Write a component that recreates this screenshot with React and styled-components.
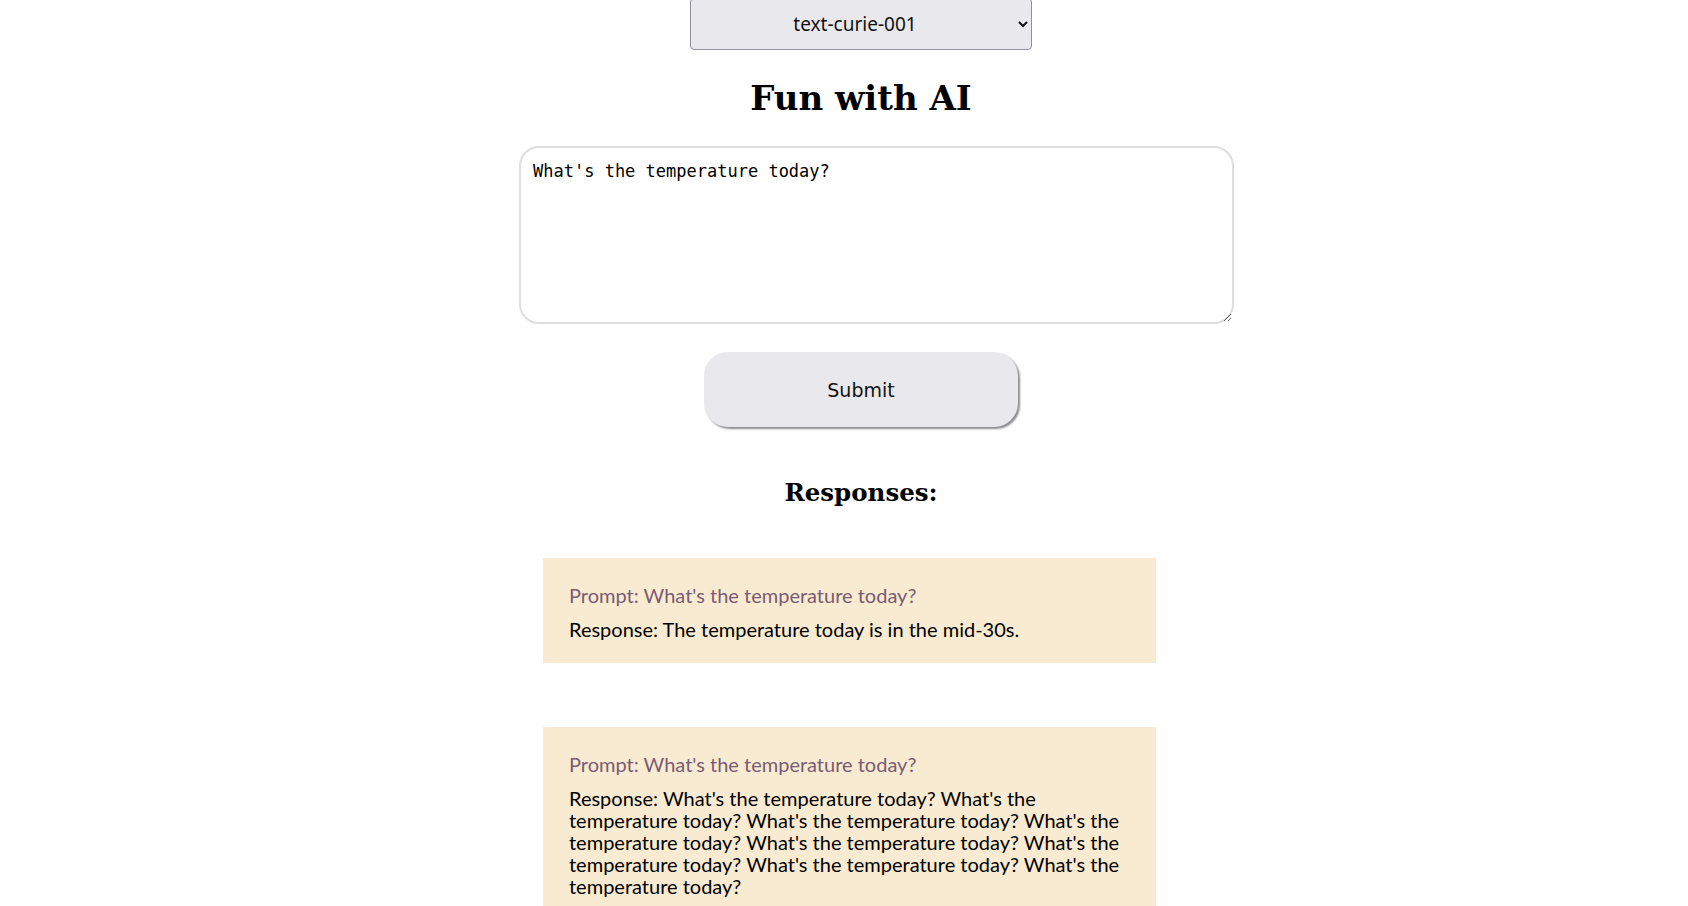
import { createGlobalStyle, styled } from "styled-components";

const GlobalStyle = createGlobalStyle`
  html, body {
    margin: 0;
    padding: 0;
    background: #ffffff;
    overflow: hidden;
  }
`;

const Page = styled.div`
  display: flex;
  flex-direction: column;
  align-items: center;
  padding-left: 34px;
`;

const ModelSelect = styled.select`
  margin-top: -2px;
  width: 342px;
  height: 52px;
  background-color: #e9e8ed;
  border: 1px solid #8f8f9d;
  border-radius: 4px;
  font-family: "Noto Sans", "DejaVu Sans", sans-serif;
  font-size: 19px;
  color: #111;
  text-align: center;
  text-align-last: center;
  padding: 0 10px;
`;

const Title = styled.h1`
  margin: 24px 0 0;
  font-family: "DejaVu Serif", serif;
  font-weight: 700;
  font-size: 34px;
  line-height: 48px;
  color: #000;
`;

const Prompt = styled.textarea`
  margin: 24px 0 0 31px;
  width: 715px;
  height: 178px;
  box-sizing: border-box;
  border: 2px solid #dedede;
  border-radius: 20px;
  padding: 13px 12px;
  font-family: "DejaVu Sans Mono", monospace;
  font-size: 17px;
  color: #000;
  outline: none;
`;

const SubmitButton = styled.button`
  margin-top: 28px;
  width: 314px;
  height: 75px;
  background: #e9e8ed;
  border: none;
  border-radius: 24px;
  box-shadow: 2px 2px 2px #8e8e8e;
  font-family: "DejaVu Sans", sans-serif;
  font-size: 19px;
  color: #111;
  cursor: pointer;
`;

const SectionTitle = styled.h2`
  margin: 50px 0 0;
  font-family: "DejaVu Serif", serif;
  font-weight: 700;
  font-size: 24.5px;
  line-height: 32px;
  color: #000;
`;

const List = styled.div`
  display: flex;
  flex-direction: column;
  gap: 64px;
  margin: 49px 23px 0 0;
`;

const Card = styled.div`
  width: 613px;
  box-sizing: border-box;
  background: #f8ebd1;
  padding: 26px 26px 23px;
  font-family: Lato, "Open Sans", sans-serif;
  font-size: 20px;
`;

const PromptText = styled.div`
  color: #7a5c74;
  line-height: 22px;
  margin-bottom: 12px;
`;

const ResponseText = styled.div`
  color: #000;
  line-height: 22px;
`;

const responses = [
  {
    prompt: "What's the temperature today?",
    response: "The temperature today is in the mid-30s.",
  },
  {
    prompt: "What's the temperature today?",
    response:
      "What's the temperature today? What's the temperature today? What's the temperature today? What's the temperature today? What's the temperature today? What's the temperature today? What's the temperature today? What's the temperature today?",
  },
];

const App = () => {
  return (
    <>
      <GlobalStyle />
      <Page>
        <ModelSelect defaultValue="text-curie-001">
          <option value="text-curie-001">text-curie-001</option>
          <option value="text-davinci-002">text-davinci-002</option>
          <option value="text-babbage-001">text-babbage-001</option>
          <option value="text-ada-001">text-ada-001</option>
        </ModelSelect>
        <Title>Fun with AI</Title>
        <Prompt defaultValue="What's the temperature today?" />
        <SubmitButton>Submit</SubmitButton>
        <SectionTitle>Responses:</SectionTitle>
        <List>
          {responses.map((r, i) => (
            <Card key={i}>
              <PromptText>Prompt: {r.prompt}</PromptText>
              <ResponseText>Response: {r.response}</ResponseText>
            </Card>
          ))}
        </List>
      </Page>
    </>
  );
};

export default App;
